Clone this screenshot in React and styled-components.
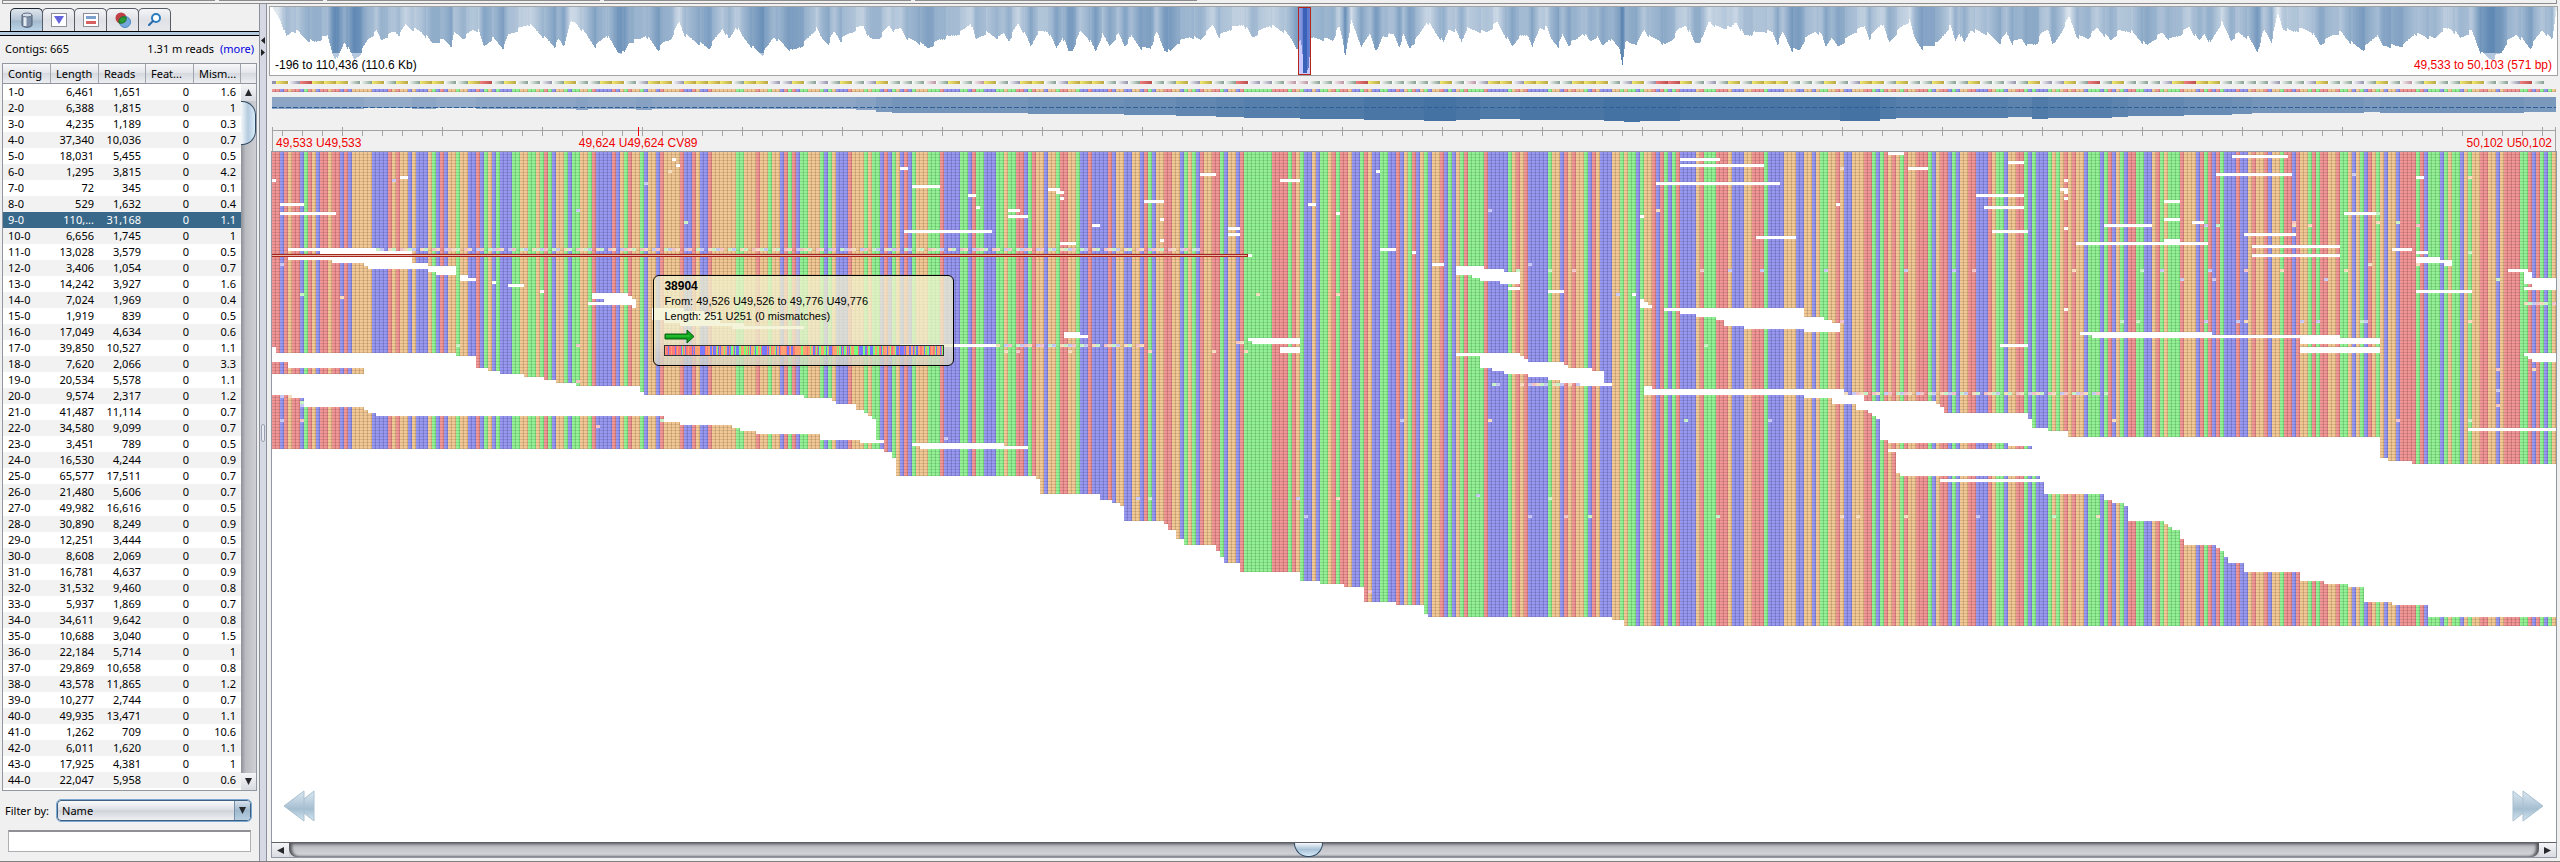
import React from "react";
import styled, { createGlobalStyle } from "styled-components";

/* ------------------------------------------------------------------ data */

const CONTIGS = `1-0 6,461 1,651 1.6|2-0 6,388 1,815 1|3-0 4,235 1,189 0.3|4-0 37,340 10,036 0.7|5-0 18,031 5,455 0.5|6-0 1,295 3,815 4.2|7-0 72 345 0.1|8-0 529 1,632 0.4|9-0 110,... 31,168 1.1|10-0 6,656 1,745 1|11-0 13,028 3,579 0.5|12-0 3,406 1,054 0.7|13-0 14,242 3,927 1.6|14-0 7,024 1,969 0.4|15-0 1,919 839 0.5|16-0 17,049 4,634 0.6|17-0 39,850 10,527 1.1|18-0 7,620 2,066 3.3|19-0 20,534 5,578 1.1|20-0 9,574 2,317 1.2|21-0 41,487 11,114 0.7|22-0 34,580 9,099 0.7|23-0 3,451 789 0.5|24-0 16,530 4,244 0.9|25-0 65,577 17,511 0.7|26-0 21,480 5,606 0.7|27-0 49,982 16,616 0.5|28-0 30,890 8,249 0.9|29-0 12,251 3,444 0.5|30-0 8,608 2,069 0.7|31-0 16,781 4,637 0.9|32-0 31,532 9,460 0.8|33-0 5,937 1,869 0.7|34-0 34,611 9,642 0.8|35-0 10,688 3,040 1.5|36-0 22,184 5,714 1|37-0 29,869 10,658 0.8|38-0 43,578 11,865 1.2|39-0 10,277 2,744 0.7|40-0 49,935 13,471 1.1|41-0 1,262 709 10.6|42-0 6,011 1,620 1.1|43-0 17,925 4,381 1|44-0 22,047 5,958 0.6`
  .split("|")
  .map((line) => {
    const [name, length, reads, mismatches] = line.split(" ");
    return { name, length, reads, features: "0", mismatches };
  });

const SELECTED = "9-0";

/* One letter per consensus column, naming its colour: Red, Orange, Green, Blue. */
const SEQUENCE = `
RRBRORRBGR OBRRORRBRB OOOOOBBBBR OROOBOBBBO GBRBOOGOOB BRBGOBGBBB GGOOGGOGRG BOOGBGGOOG RBBBBRBOGR OOGBOOBROO
OORBBROBBR OOOOOOGGOO OROOGOOBRG RBGGOOOGBG OBBBROOOGO GGBRBGOBRB GOOOGGGRBBBB
GGBRGGBBBG GOGGRRBGRO OBOOGRROOG BBRBBBBRBO OBBOOBRGBO ORROOBGOGB ROORRGBOOB RGGGGGGGRR RRGROGBBOB GGORGRROBB
GROBBGGBBR BOGRBOGBOO RBGBOGRGGG GRBBBBBGOR ORBBBBBGOO BROROOGBRO BBBOOGOGGB GOORBRGBGR BBBBORGGGR RROBBBOORR
RGBBBBOOOB BOOBOGGOOR OBBOOORRGB GROROGROOR RRGBORRBGB OORRBBBROG GBOORRGBGB BBGOGORORO OBGGGBGRBO GBRRGGBBOR
GOGGGROOOB RGRBRGBBBR BBOROORBOO GRRBROOGRG RROORGGOBO GBROGOBOOB RRRRGRBGGG BGOGGBOGOO RROOBORRRR GGRBRGBGO
`.replace(/\s/g, "");

const BASES = SEQUENCE.length;
const READ_ROWS = 158;
const BASE_COLORS = { R: "#f09090", O: "#f0c48e", G: "#8cf08e", B: "#9292f0" };

const PROTEINS =
  "YPKYYYSSYSYSYYSSYKSYSSPSYSSYYSPYYPYYYYSYYPPYSPSYSPYSSSMSY" +
  "SMYSPYYSPYYYSPSKSSYPYSSKPPSMMSSMSKYSSSSSYSMPYYPYYSSYYYSPYPKKYSPSYSY" +
  "YYSSSYSPYYSYSSYSSYSSPSYPPYSKSYSSSPYKYYSSSSPSSPYSSPSYSMSYSSYYSSPKS";

/* Empty stretches between reads: [first base, row, end base, rows] */
const GAPS = [
  [0,9,1],[32,8,34],[2,17,8],[2,20,16],[100,2,101],[101,4,102],[157,5,159],[160,11,167],[158,26,180],
  [232,7,236],[252,9,257],[276,6,277],[194,12,197],[196,13,198],[197,15,198],[174,14,176],[176,18,177],
  [184,19,187],[184,21,189],[218,16,223],[259,17,261],[222,22,223],[266,20,267],[205,24,207],[239,25,242],
  [239,27,242],[222,29,223],[197,30,201],[277,32,281],[285,33,286],[244,34,245],[290,37,293],[352,2,362],
  [352,4,373],[346,10,377],[342,21,343],[371,28,381],[319,46,323],[340,47,341],[296,38,303],[296,39,308],
  [296,40,312],[300,41,312],[302,42,312],[307,43,312],[309,45,312],
  [404,0,408],[409,5,414],[434,3,438],[490,1,504],[486,7,505],[448,9,449],[447,12,449],[448,13,449],
  [448,15,449],[426,14,438],[428,18,438],[391,17,392],[430,26,439],[448,25,449],[458,24,470],[473,16,477],
  [473,22,477],[480,23,483],[473,29,477],[451,30,484],[493,27,506],[495,31,517],[495,34,517],[518,20,526],
  [536,8,538],[530,32,535],[536,33,539],[536,35,542],[536,36,545],[543,37,545],[559,39,564],[563,40,565,4],
  [565,42,571,4],[563,45,565],[536,46,550],
  [4,32,26],[12,33,35],[4,35,35],[15,36,35],[23,37,39],[24,38,46],[39,39,46],[41,40,46],[47,41,49],[47,42,51],
  [55,43,56],[59,44,63],[67,46,68],[80,47,89],[80,48,90],[83,49,91],[79,50,91],[90,51,91],[95,52,103],
  [95,53,108],[95,54,112],[95,55,112],[98,56,112],[102,57,118],[115,58,133],[157,64,181],
  [0,65,1,2],[0,67,46],[0,68,51,2],[4,70,51,2],[23,72,54],[23,73,57],[0,74,63],[0,75,68],[0,76,71],[0,77,76],
  [0,78,92,2],[0,80,93],[5,81,133],[8,82,140],[8,83,141],[8,84,146],[23,85,146],[24,86,148],[26,87,149],
  [98,88,150],[98,89,151],[102,90,151],[115,91,151],[117,92,151],[121,93,151],[137,94,151,2],[147,96,153],
  [160,97,183],[162,98,189],[198,60,202],[198,61,204],[244,62,257],[245,63,257],[252,65,257,2],
  [342,49,343],[342,50,344],[342,51,345],[348,52,383],[352,53,383],[356,54,383],[361,55,388],[363,56,390],
  [363,57,392],[368,58,392],[383,59,392],[296,67,312],[302,68,313],[302,69,314],[302,70,323],[302,71,324],
  [305,72,330],[308,73,333],[314,74,333],[319,75,333],[322,76,333],[327,77,335],[343,78,345],[343,79,393,2],
  [383,81,398],[390,82,398],[390,83,416],[396,84,417],[396,85,418],[399,86,418],[400,87,439],[401,88,439],
  [402,89,440,3],[402,92,444],[402,93,449,2],[402,95,527],[404,96,527],[434,97,527],[440,98,527],
  [404,99,527],[406,100,527,2],[406,102,529],[406,103,535],[406,104,571,3],[407,107,571],[442,108,571],
  [417,109,571],[443,110,571,4],[458,114,571,2],[460,116,571],[463,117,571],[464,118,571,5],[473,123,571],
  [474,124,571],[475,125,571],[477,126,571,3],[478,129,571,2],[486,131,571],[487,132,571],[488,133,571,2],
  [489,135,571,2],[493,137,571,3],[507,140,571,3],[513,143,571],[519,144,571],[523,145,571,5],[530,150,571],
  [539,151,571,4],[448,52,449],[452,60,485],[455,61,517],[507,62,527,2],[507,65,527,2],[432,64,439],
  [563,67,571],[564,68,571],[565,69,571],[549,92,571],
];

/* Lowest filled row along the bottom of the alignment: [end base, row] */
const FLOOR = [
  [153,99],[155,100],[156,102],[191,108],[192,109],[207,114],[210,116],[212,117],[213,118],[223,123],[224,124],
  [226,126],[228,129],[236,131],[237,133],[238,135],[242,137],[257,140],[262,143],[268,144],[273,145],[281,150],
  [288,151],[289,154],[335,155],[338,156],
];

/* Mismatching bases: "row: base base ..." */
const VARIANTS = `5:392;6:99;7:520;8:549;9:30;10:93;19:76,304,346;20:526;23:103,526,531,505;24:483,486,509,536,505;33:549;37:2,314,524,536;39:311,319,325,357,364,372,388,408,420,425,450,467,472,484,493,502,518;42:477,485,513,556;47:7,246,266,336;48:17;50:563,564,565,566,567,568,570;56:392,462,466,483,491,493,507,511,522,523,549;63:241,242;64:46,76,358;66:183,186,199,219,235,243;72:556,565;76:76;77:305,306,312,314,315,316,317,318,320,321,322,324,326;79:556;81:2,4;83:7;84:7,556;89:2,7,97,282,304,353,374,460,531,549;91:81;95:168;114:301;115:216,219,256,266,319;121:258,314,323,329,361,392,396,408,426,445,456;146:274`
  .split(";")
  .flatMap((line) => {
    const [row, list] = line.split(":");
    return list.split(",").map((b) => [Number(b), Number(row)]);
  });

/* Reads that disagree with the consensus nearly everywhere: [first base, row, end base] */
const DIVERGENT = [[26, 32, 232], [181, 64, 218], [393, 80, 459]];

/* Depth of coverage: [first base, depth] */
const COVERAGE = [
  [0,12],[23,11],[35,12],[41,11],[51,12],[76,13],[79,12],[91,13],[95,12],[146,13],[151,15],[155,16],[189,17],[213,18],
  [226,19],[236,20],[243,21],[257,22],[273,23],[288,24],[296,23],[302,22],[312,23],[333,24],[338,25],[342,24],
  [352,23],[392,24],[402,22],[406,21],[434,20],[440,22],[444,21],[460,20],[464,19],[478,18],[490,17],[495,16],
  [523,15],[527,16],[563,15],[571,15],
];

/* Whole-contig coverage profile, in three stretches of position/depth pairs. */
const PROFILE = [
  { start: -10, zoom: 2.24, points: "25,22 45,60 58,112 70,95 82,95 100,115 120,128 135,118 150,108 163,165 172,180 188,125 210,180 222,165 240,120 260,95 270,120 300,95 312,105 325,75 340,88 360,95 385,130 410,120 428,138 434,100 455,115 475,90 488,92 500,140 520,115 545,145 555,105 575,90 600,72 625,100 660,140 668,120 680,140 692,70 705,68 730,105 750,140 775,105 800,155 815,160 825,130 850,118 862,105 890,150 905,128 920,115 938,65 950,105 975,125 1005,145 1035,85 1050,120 1065,80 1080,110 1100,140 1125,165 1150,110 1190,155 1215,135 1245,85 1258,118 1272,130 1285,95 1300,122 1320,100 1350,75 1365,120 1385,115 1408,75 1420,95 1435,85 1450,118 1470,125 1495,145 1520,120 1545,110 1566,100" },
  { start: 690, zoom: 1.96, points: "3,95 20,68 30,120 50,98 75,115 85,100 95,122 113,70 125,100 138,140 150,100 170,92 188,145 200,110 212,155 220,150 235,95 250,112 265,155 278,105 292,138 310,102 322,138 335,110 345,128 355,145 372,145 385,98 400,150 412,155 425,130 450,110 470,120 495,75 507,110 525,90 555,72 572,112 605,75 635,95 650,120 660,145 667,120 673,200 677,222 682,200 687,120 692,115 730,120 742,80 749,120 754,170 759,120 766,65 787,142 803,100 816,158 828,108 850,105 860,140 868,105 880,145 895,110 912,65 928,95 945,130 955,88 968,92 980,125 990,88 1030,98 1050,68 1065,105 1080,140 1090,115 1110,105 1120,140 1133,85 1148,85 1155,115 1170,138 1178,105 1190,135 1205,120 1218,98 1232,125 1245,110 1256,138 1270,115 1290,145 1296,195 1302,125 1312,130 1325,130 1338,88 1350,115 1368,120 1378,138 1395,115 1405,90 1420,75 1438,130 1452,120 1465,62 1480,82 1508,85 1518,65 1535,108 1560,98" },
  { start: 1490, zoom: 1.96, points: "5,92 22,98 32,132 42,98 60,150 75,150 85,120 105,92 118,105 126,140 135,115 150,140 165,120 180,100 202,78 212,115 236,68 250,128 262,105 275,80 290,62 300,115 315,145 345,130 370,78 380,122 388,98 397,132 410,90 440,100 468,128 480,98 492,130 510,115 522,138 540,130 550,100 562,88 573,138 590,90 603,50 618,110 640,115 658,85 685,122 700,95 722,92 755,138 785,98 800,120 820,105 838,80 858,125 868,100 880,130 902,68 920,120 935,100 955,115 972,155 985,90 1000,125 1012,40 1022,85 1040,95 1060,88 1078,95 1095,135 1120,105 1135,98 1160,135 1180,148 1205,105 1218,138 1258,138 1280,100 1320,118 1332,92 1350,85 1370,115 1392,92 1410,160 1430,178 1450,160 1460,130 1480,102 1507,145 1530,90 1550,120 1558,30" },
].flatMap(({ start, zoom, points }) =>
  points.split(" ").map((pair) => {
    const [x, y] = pair.split(",").map(Number);
    return [start + x / zoom, y / 3 - 7];
  })
);

const mix = (a, b, t) => {
  const k = Math.max(0, Math.min(1, t));
  return `rgb(${a.map((v, i) => Math.round(v + (b[i] - v) * k)).join(",")})`;
};

/* ---------------------------------------------------------------- styles */

const Global = createGlobalStyle`
  *, *::before, *::after { box-sizing: border-box; }
  html, body { margin: 0; padding: 0; }
  body {
    background: #f0f0f0;
    color: #000;
    font-family: "Noto Sans", "Open Sans", sans-serif;
    font-size: 11px;
  }
  button, input, select { font: inherit; color: inherit; }
`;

const Window = styled.div`
  display: flex;
  flex-direction: column;
  min-height: 100vh;
  border-bottom: 1px solid #808080;
`;

const RibbonEdge = styled.div`
  display: flex;
  flex: none;
  gap: 4px;
  height: 4px;
  margin: 0 3px 0 2px;
  border: solid #8c8c8c;
  border-width: 0 1px 1px;
`;

const RibbonGroup = styled.div`
  width: ${(p) => p.$width}px;
  height: 1px;
  background: #8c8c8c;
`;

const Body = styled.div`
  display: flex;
  flex: 1;
`;

const Sidebar = styled.aside`
  display: flex;
  flex-direction: column;
  flex: none;
  width: 259px;
  padding-top: 4px;
`;

const TabBar = styled.div`
  display: flex;
  height: 23px;
  padding-left: 10px;
`;

const Tab = styled.button`
  display: flex;
  align-items: center;
  justify-content: center;
  width: 33px;
  height: 23px;
  margin-right: -1px;
  padding: 0;
  border: 1px solid ${(p) => (p.$active ? "#1c2430" : "#565b66")};
  border-bottom: 0;
  border-radius: 5px 5px 0 0;
  background: ${(p) =>
    p.$active
      ? "linear-gradient(#dfe5ec, #b4c5d6 50%, #a4b9cd 55%, #bdd5e8)"
      : "linear-gradient(#f4f5f7, #dfe1e6 50%, #e6e8ec)"};
`;

const TabRule = styled.div`
  height: 5px;
  background: #b4cbe0;
  border: solid #000;
  border-width: 1px 0;
`;

const Summary = styled.div`
  display: flex;
  align-items: center;
  height: 27px;
  padding: 0 5px 2px;
  gap: 6px;
`;

const Grow = styled.span`
  flex: 1;
`;

const MoreLink = styled.a`
  color: #0000e0;
  text-decoration: none;
`;

const TableFrame = styled.div`
  display: grid;
  grid-template-columns: 1fr 15px;
  grid-template-rows: 20px 1fr;
  height: 728px;
  margin: 0 2px;
  border: 1px solid #9297a1;
  background: #fff;
`;

const Table = styled.table`
  grid-row: 1 / 3;
  width: 100%;
  border-collapse: separate;
  border-spacing: 0;
  table-layout: fixed;
  align-self: start;
`;

const HeadCell = styled.th`
  height: 20px;
  padding: 0 0 0 5px;
  text-align: left;
  font-weight: normal;
  line-height: 18px;
  border-right: 1px solid #a0a5ae;
  border-bottom: 1px solid #8f949e;
  background: linear-gradient(#f8f8fa, #e4e6ea 45%, #d6d9df 50%, #eceef1);
`;

const HeadCorner = styled.div`
  border-bottom: 1px solid #8f949e;
  background: linear-gradient(#f8f8fa, #e4e6ea 45%, #d6d9df 50%, #eceef1);
`;

const Row = styled.tr`
  background: ${(p) => (p.$selected ? "#39698a" : "#fff")};
  color: ${(p) => (p.$selected ? "#fff" : "#000")};
  &:nth-child(even) { background: #f2f2f2; }
`;

const Cell = styled.td`
  height: 16px;
  padding: 0 5px;
  line-height: 16px;
  text-align: ${(p) => p.$align || "right"};
  white-space: nowrap;
`;

const VScroll = styled.div`
  display: flex;
  flex-direction: column;
  background: linear-gradient(90deg, #8d9097, #b9bbc1 30%, #cfd0d5);
`;

const VThumb = styled.div`
  height: 44px;
  border: 1px solid #2f4a63;
  border-left: 0;
  border-radius: 0 14px 14px 0;
  background: linear-gradient(90deg, #f4f8fb, #b4cbdf 50%, #d9ecf8);
`;

const ScrollButton = styled.button`
  display: flex;
  align-items: center;
  justify-content: center;
  flex: none;
  width: ${(p) => p.$width}px;
  height: ${(p) => p.$height}px;
  padding: 0;
  border: 0;
  background: linear-gradient(#f4f5f7, #d8dbe0);
`;

const FilterRow = styled.label`
  display: flex;
  align-items: center;
  gap: 8px;
  padding: 9px 8px 0 5px;
`;

const SelectBox = styled.span`
  position: relative;
  display: block;
  flex: 1;
  height: 21px;
`;

const Select = styled.select`
  width: 100%;
  height: 21px;
  padding: 0 20px 0 4px;
  appearance: none;
  border: 1px solid #3f5f80;
  border-radius: 4px;
  outline: 1px solid #79a8d2;
  background: linear-gradient(#fafafb, #dcdfe4 45%, #d0d4da 52%, #eef0f2);
`;

const SelectArrow = styled.span`
  position: absolute;
  top: 1px;
  right: 1px;
  bottom: 1px;
  display: flex;
  align-items: center;
  justify-content: center;
  width: 16px;
  border-left: 1px solid #7590aa;
  border-radius: 0 3px 3px 0;
  background: linear-gradient(#d8e2ec, #a0b8cd 50%, #b7cfe2);
  pointer-events: none;
`;

const FilterInput = styled.input`
  height: 22px;
  margin: 9px 8px 8px;
  padding: 0 4px;
  border: 1px solid #b0b0b4;
  border-top: 2px solid #8f9096;
  background: #fff;
`;

const Divider = styled.div`
  display: grid;
  grid-template-rows: 1fr auto 1fr;
  flex: none;
  justify-items: center;
  width: 8px;
  border: solid #8c909a;
  border-width: 0 1px;
  background: #d6d9e4;
`;

const CollapseArrows = styled.svg`
  width: 6px;
  height: 20px;
  margin-top: 33px;
`;

const Grip = styled.div`
  width: 4px;
  height: 18px;
  border: 1px solid #9aa2b2;
  border-radius: 2px;
  background: #e8ebf2;
`;

const Main = styled.main`
  flex: 1;
  min-width: 0;
  display: flex;
  flex-direction: column;
  padding: 2px 2px 3px 2px;
  font-family: "Liberation Sans", Arial, sans-serif;
  font-size: 12px;
`;

const Overview = styled.section`
  display: flex;
  flex-direction: column;
  justify-content: flex-end;
  position: relative;
  height: 70px;
  border: 1px solid #a3a3a3;
  background: #fff;
`;

const Plot = styled.svg`
  display: block;
  width: 100%;
  height: ${(p) => p.$height}px;
`;

const OverviewPlot = styled(Plot)`
  position: absolute;
  inset: 0;
`;

const OverviewCaption = styled.div`
  position: relative;
  display: flex;
  justify-content: space-between;
  padding: 0 5px 3px;
  line-height: 14px;
`;

const Red = styled.span`
  color: #f00000;
`;

const Tracks = styled.section`
  display: flex;
  flex-direction: column;
  gap: 5px;
  margin: 5px 2px 0 3px;
`;

const RulerLabels = styled.div`
  position: relative;
  display: flex;
  justify-content: space-between;
  height: 15px;
  margin: 0 2px 0 3px;
  padding: 0 3px;
  border: solid #a3a3a3;
  border-width: 0 1px;
  line-height: 14px;
  color: #f00000;
`;

const Marker = styled.span`
  position: absolute;
  left: 16%;
  transform: translateX(-50%);
  white-space: nowrap;
`;

const Canvas = styled.section`
  position: relative;
  display: flex;
  flex: 1;
  flex-direction: column;
  justify-content: space-between;
  margin: 0 1px 0 2px;
  border: solid #9297a1;
  border-width: 1px 1px 0;
  background: #fff;
`;

const Pager = styled.div`
  display: flex;
  justify-content: space-between;
  padding: 0 11px 19px 10px;
`;

const PagerButton = styled.button`
  width: 34px;
  height: 34px;
  padding: 0;
  border: 0;
  background: none;
`;

const Tooltip = styled.div`
  position: absolute;
  top: 123px;
  left: 16.7%;
  display: flex;
  flex-direction: column;
  width: 301px;
  height: 91px;
  padding: 3px 10px;
  border: 1px solid #000;
  border-radius: 6px;
  background: linear-gradient(rgba(243, 243, 205, 0.76), rgba(240, 240, 208, 0.76) 70%, rgba(214, 214, 200, 0.76));
  font-size: 11px;
  line-height: 15px;
`;

const TooltipTitle = styled.strong`
  font-size: 12px;
  line-height: 15px;
`;

const DirectionArrow = styled.svg`
  width: 32px;
  height: 16px;
  margin-top: 4px;
`;

const MiniRead = styled(Plot)`
  width: 280px;
  margin-top: 1px;
  border: 1px solid #333;
`;

const HScroll = styled.div`
  display: flex;
  align-items: stretch;
  height: 16px;
  margin: 0 1px 0 2px;
  border: 1px solid #9297a1;
  border-top-color: #606268;
  background: linear-gradient(#9fa1a6, #c2c4ca 35%, #d6d8de);
`;

const HTrack = styled.div`
  flex: 1;
  padding-left: 44%;
  border-radius: 0 0 8px 8px;
  box-shadow: inset 3px 0 3px #55575c, inset -3px 0 3px #55575c;
`;

const HThumb = styled.div`
  width: 29px;
  height: 14px;
  border: 1px solid #2f4a63;
  border-top: 0;
  border-radius: 0 0 15px 15px;
  background: linear-gradient(#f4f8fb, #a9c2d8 50%, #d5ebf7);
`;

/* -------------------------------------------------------------- drawings */

function sequencePaths(sequence, height) {
  const paths = { R: "", O: "", G: "", B: "" };
  for (let i = 0; i < sequence.length; ) {
    let end = i + 1;
    while (sequence[end] === sequence[i]) end += 1;
    paths[sequence[i]] += `M${i} 0H${end}V${height}H${i}Z`;
    i = end;
  }
  return paths;
}

function Stripes({ sequence, height, colors = BASE_COLORS }) {
  const paths = sequencePaths(sequence, height);
  return Object.keys(paths).map((key) => <path key={key} d={paths[key]} fill={colors[key]} />);
}

function CellShade({ rows }) {
  let right = "";
  let bottom = "";
  let left = "";
  for (let i = 0; i < BASES; i += 1) {
    right += `M${i + 0.75} 0h.25v${rows}h-.25z`;
    left += `M${i} 0h.5v${rows}h-.5z`;
  }
  for (let r = 0; r < rows; r += 1) bottom += `M0 ${r + 2 / 3}h${BASES}v${1 / 3}h-${BASES}z`;
  return (
    <>
      <path d={left} fill="#fff" opacity=".07" />
      <path d={right} fill="#000" opacity=".12" />
      <path d={bottom} fill="#000" opacity=".1" />
    </>
  );
}

function Alignment() {
  let floorStart = 0;
  const floor = FLOOR.map(([end, row]) => {
    const d = `M${floorStart} ${row}H${end}V${READ_ROWS}H${floorStart}Z`;
    floorStart = end;
    return d;
  }).join("");
  const gaps = GAPS.map(([from, row, to, rows = 1]) => `M${from} ${row}H${to}v${rows}H${from}Z`).join("");
  const keys = ["#f2c4c8", "#f3dcc0", "#c6f2c8", "#c8c8f4"];
  const divergent = DIVERGENT.flatMap(([from, row, to]) => {
    const cells = [];
    for (let b = from; b < to; b += 1) {
      if ((b * 7) % 11 < 8) cells.push([b, row]);
    }
    return cells;
  });
  return (
    <Plot $height={474} viewBox={`0 0 ${BASES} ${READ_ROWS}`} preserveAspectRatio="none" shapeRendering="crispEdges">
      <Stripes sequence={SEQUENCE} height={READ_ROWS} />
      <CellShade rows={READ_ROWS} />
      {[...VARIANTS, ...divergent].map(([b, row]) => (
        <rect key={`${b}-${row}`} x={b} y={row} width="1" height="1" fill={keys[(b * 5 + row) % 4]} />
      ))}
      <path d={gaps + floor} fill="#fff" />
      <path d="M0 34H244V35H0Z" fill="#a8261e" />
      <rect x="0" y={34 + 1 / 3} width="243.75" height={1 / 3} fill="#e6b8a8" />
    </Plot>
  );
}

function OverviewChart() {
  const bars = [];
  let k = 0;
  for (let x = 0; x < 2286; x += 1) {
    while (k < PROFILE.length - 2 && PROFILE[k + 1][0] < x) k += 1;
    const [x0, y0] = PROFILE[k];
    const [x1, y1] = PROFILE[k + 1];
    const t = Math.max(0, Math.min(1, (x - x0) / (x1 - x0)));
    const cell = Math.floor(x / 2);
    const noise = ((cell * 7919) % 13) / 13 - 0.5;
    const depth = Math.max(0, y0 + (y1 - y0) * t + noise * 4);
    bars.push({ x, depth: Math.round(depth) });
  }
  const fill = (d) => mix([222, 230, 238], [92, 134, 178], (d - 8) / 46);
  return (
    <OverviewPlot $height={68} viewBox="0 0 2286 68" preserveAspectRatio="none" shapeRendering="crispEdges">
      {bars.map(({ x, depth }) => (
        <rect key={x} x={x} y="0" width="1" height={Math.min(depth, x > 1000 && x < 2000 ? 68 : 46)} fill={fill(depth)} />
      ))}
      {bars
        .filter(({ x, depth }) => depth > 46 && !(x > 1000 && x < 2000))
        .map(({ x, depth }) => (
          <rect key={x} x={x} y="46" width="1" height={depth - 46} fill="#b3c8de" />
        ))}
      <rect x="1028" y="0" width="12" height="67" fill="#6464ff" opacity=".35" />
      <rect x="1033" y="0" width="4" height="66" fill="#3a62b8" />
      <path d="M1028 0h13v68h-13zM1029 1v66h11v-66z" fill="#b4261c" fillRule="evenodd" />
    </OverviewPlot>
  );
}

const PROTEIN_TONES = {
  Y: ["#f2ea6e", "#b9a648"],
  S: ["#ffffff", "#84a08f"],
  P: ["#ffffff", "#9292ac"],
  M: ["#ffffff", "#bd93a3"],
  K: ["#f28080", "#b85050"],
};

function ProteinTrack() {
  return (
    <Plot $height={3} viewBox={`0 0 ${BASES} 3`} preserveAspectRatio="none">
      <defs>
        {Object.entries(PROTEIN_TONES).map(([key, [from, to]]) => (
          <linearGradient id={`protein-${key}`} key={key}>
            <stop offset="0" stopColor={from} />
            <stop offset="1" stopColor={to} />
          </linearGradient>
        ))}
      </defs>
      <rect width="1" height="3" fill="#9292ac" />
      {[...PROTEINS].map((key, i) => (
        <rect key={i} x={1 + i * 3} width="3" height="3" fill={`url(#protein-${key})`} />
      ))}
    </Plot>
  );
}

function ConsensusTrack() {
  return (
    <Plot $height={3} viewBox={`0 0 ${BASES} 1`} preserveAspectRatio="none" shapeRendering="crispEdges">
      <Stripes sequence={SEQUENCE} height={1} />
      <CellShade rows={1} />
    </Plot>
  );
}

function CoverageTrack() {
  return (
    <Plot $height={25} viewBox="0 0 2284 25" preserveAspectRatio="none" shapeRendering="crispEdges">
      {COVERAGE.slice(0, -1).map(([base, depth], i) => (
        <rect
          key={base}
          x={base * 4}
          width={(COVERAGE[i + 1][0] - base) * 4}
          height={depth}
          fill={mix([152, 174, 202], [68, 114, 162], (depth - 10) / 14)}
        />
      ))}
      <path d="M0 10.5H2284" stroke="#2d5f98" strokeDasharray="5 2" />
    </Plot>
  );
}

function Ruler() {
  let ticks = "";
  for (let x = 10; x < 2284; x += 20) ticks += `M${x} 4h1v5h-1z`;
  for (let x = 70; x < 2284; x += 100) ticks += `M${x} 0h1v4h-1z`;
  return (
    <Plot $height={9} viewBox="0 0 2284 9" preserveAspectRatio="none" shapeRendering="crispEdges">
      <path d={`M0 3H2284V4H0ZM0 0h1v9h-1zM2283 0h1v9h-1z${ticks}`} fill="#a3a3a3" />
      <path d="M366 0h1v9h-1z" fill="#f00000" />
    </Plot>
  );
}

function Triangle({ direction }) {
  const shapes = { up: "M0 6L3 0L6 6Z", down: "M0 0H6L3 6Z", left: "M6 0V6L0 3Z", right: "M0 0V6L6 3Z" };
  return (
    <svg width="7" height="7" viewBox="0 0 6 6" aria-hidden="true">
      <path d={shapes[direction]} fill="#26282c" />
    </svg>
  );
}

function DoubleArrow({ flip }) {
  return (
    <svg width="34" height="34" viewBox="0 0 34 34" aria-hidden="true">
      <defs>
        <linearGradient id="pager" x2="0" y2="1">
          <stop offset="0" stopColor="#dce8f0" />
          <stop offset=".45" stopColor="#b3c9d9" />
          <stop offset=".6" stopColor="#a4bed1" />
          <stop offset="1" stopColor="#d5e6f0" />
        </linearGradient>
      </defs>
      <g transform={flip ? "matrix(-1 0 0 1 34 0)" : undefined} fill="url(#pager)" stroke="#a9c0d0" strokeWidth="1">
        <path d="M32 2V32L13 17Z" />
        <path d="M22 2V32L2 17Z" />
      </g>
    </svg>
  );
}

const ICONS = {
  contigs: (
    <>
      <path d="M3 3V13C3 16 13 16 13 13V3Z" fill="#7e8fa8" stroke="#4b5a70" />
      <path d="M6 5V14" stroke="#e4ebf2" strokeWidth="3" />
      <ellipse cx="8" cy="3" rx="5" ry="2" fill="#d5dee8" stroke="#5e6e84" />
    </>
  ),
  filter: (
    <>
      <rect x=".5" y="1.5" width="15" height="13" fill="#fff" stroke="#8c8f96" />
      <path d="M3 4H13L8 12Z" fill="#6464dc" />
    </>
  ),
  rows: (
    <>
      <rect x=".5" y="1.5" width="15" height="13" fill="#fff" stroke="#8c8f96" />
      <path d="M3 4H13V7H3Z" fill="#7da0cf" />
      <path d="M3 9H13V12H3Z" fill="#d86060" />
    </>
  ),
  colours: (
    <>
      <circle cx="6" cy="6" r="5.5" fill="#c04048" />
      <circle cx="10" cy="10" r="5.5" fill="#74a8dc" stroke="#4f86c0" />
      <path d="M4 11C3 6 7 4 11 5C12 9 9 12 4 11Z" fill="#2c9a34" stroke="#1b6a22" />
    </>
  ),
  search: (
    <>
      <circle cx="9" cy="6" r="4" fill="#fff" stroke="#2a7cc0" strokeWidth="2" />
      <path d="M6 9L2 13" stroke="#2468a8" strokeWidth="2" strokeLinecap="round" />
    </>
  ),
};

function Icon({ name }) {
  return (
    <svg width="16" height="16" viewBox="0 0 16 16" fill="none" aria-hidden="true">
      {ICONS[name]}
    </svg>
  );
}

/* ------------------------------------------------------------------ page */

function ContigTable() {
  return (
    <TableFrame>
      <Table>
        <colgroup>
          {[48, 48, 47, 48, 47].map((width, i) => (
            <col key={i} width={width} />
          ))}
        </colgroup>
        <thead>
          <tr>
            {["Contig", "Length", "Reads", "Feat...", "Mism..."].map((title) => (
              <HeadCell key={title} scope="col">{title}</HeadCell>
            ))}
          </tr>
        </thead>
        <tbody>
          {CONTIGS.map((c) => (
            <Row key={c.name} $selected={c.name === SELECTED}>
              <Cell $align="left">{c.name}</Cell>
              <Cell>{c.length}</Cell>
              <Cell>{c.reads}</Cell>
              <Cell>{c.features}</Cell>
              <Cell>{c.mismatches}</Cell>
            </Row>
          ))}
        </tbody>
      </Table>
      <HeadCorner />
      <VScroll>
        <ScrollButton $width={15} $height={17} aria-label="Scroll up"><Triangle direction="up" /></ScrollButton>
        <VThumb />
        <Grow />
        <ScrollButton $width={15} $height={17} aria-label="Scroll down"><Triangle direction="down" /></ScrollButton>
      </VScroll>
    </TableFrame>
  );
}

function ReadTooltip() {
  return (
    <Tooltip role="tooltip">
      <TooltipTitle>38904</TooltipTitle>
      <span>From: 49,526 U49,526 to 49,776 U49,776</span>
      <span>Length: 251 U251 (0 mismatches)</span>
      <DirectionArrow viewBox="0 0 32 16" aria-hidden="true">
        <path d="M1 6H23V2L30 8.500L23 15V11H1Z" fill="#0da31a" stroke="#0b5c12" />
        <path d="M2 8H26" stroke="#3ad044" />
      </DirectionArrow>
      <MiniRead $height={11} viewBox="0 0 251 1" preserveAspectRatio="none" shapeRendering="crispEdges">
        <Stripes
          sequence={`ORRBROR${SEQUENCE.slice(0, 244)}`}
          height={1}
          colors={{ R: "#ff7878", O: "#ffa070", G: "#78ff78", B: "#7878ff" }}
        />
      </MiniRead>
    </Tooltip>
  );
}

export default function App() {
  return (
    <Window>
      <Global />
      <RibbonEdge>
        {[212, 104, 273, 307, 282].map((width) => (
          <RibbonGroup key={width} $width={width} />
        ))}
      </RibbonEdge>
      <Body>
        <Sidebar>
          <TabBar role="tablist">
            {Object.keys(ICONS).map((name, i) => (
              <Tab key={name} role="tab" aria-label={name} aria-selected={i === 0} $active={i === 0}>
                <Icon name={name} />
              </Tab>
            ))}
          </TabBar>
          <TabRule />
          <Summary>
            <span>Contigs: 665</span>
            <Grow />
            <span>1.31 m reads</span>
            <MoreLink href="#more">(more)</MoreLink>
          </Summary>
          <ContigTable />
          <FilterRow>
            Filter by:
            <SelectBox>
              <Select defaultValue="Name">
                <option>Name</option>
              </Select>
              <SelectArrow><Triangle direction="down" /></SelectArrow>
            </SelectBox>
          </FilterRow>
          <FilterInput aria-label="Filter text" />
        </Sidebar>
        <Divider>
          <CollapseArrows viewBox="0 0 6 20" aria-hidden="true">
            <path d="M5 0V7L1 3.500ZM1 12V19L5 15.500Z" fill="#222" />
          </CollapseArrows>
          <Grip />
        </Divider>
        <Main>
          <Overview>
            <OverviewChart />
            <OverviewCaption>
              <span>-196 to 110,436 (110.6 Kb)</span>
              <Red>49,533 to 50,103 (571 bp)</Red>
            </OverviewCaption>
          </Overview>
          <Tracks>
            <ProteinTrack />
            <ConsensusTrack />
            <CoverageTrack />
            <Ruler />
          </Tracks>
          <RulerLabels>
            <span>49,533 U49,533</span>
            <Marker>49,624 U49,624 CV89</Marker>
            <span>50,102 U50,102</span>
          </RulerLabels>
          <Canvas>
            <Alignment />
            <Pager>
              <PagerButton aria-label="Page left"><DoubleArrow /></PagerButton>
              <PagerButton aria-label="Page right"><DoubleArrow flip /></PagerButton>
            </Pager>
            <ReadTooltip />
          </Canvas>
          <HScroll>
            <ScrollButton $width={17} $height={14} aria-label="Scroll left"><Triangle direction="left" /></ScrollButton>
            <HTrack><HThumb /></HTrack>
            <ScrollButton $width={17} $height={14} aria-label="Scroll right"><Triangle direction="right" /></ScrollButton>
          </HScroll>
        </Main>
      </Body>
    </Window>
  );
}
